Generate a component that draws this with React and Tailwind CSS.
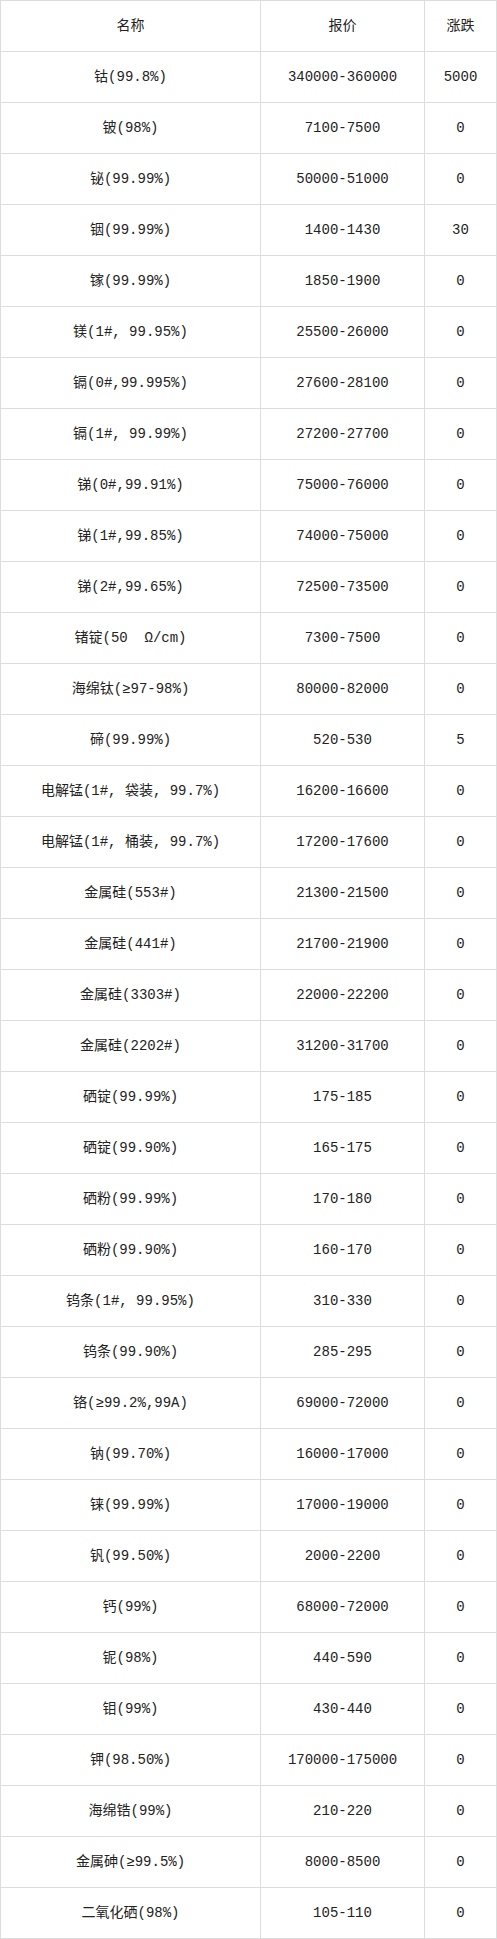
const rows = [
  ["钴(99.8%)", "340000-360000", "5000"],
  ["铍(98%)", "7100-7500", "0"],
  ["铋(99.99%)", "50000-51000", "0"],
  ["铟(99.99%)", "1400-1430", "30"],
  ["镓(99.99%)", "1850-1900", "0"],
  ["镁(1#, 99.95%)", "25500-26000", "0"],
  ["镉(0#,99.995%)", "27600-28100", "0"],
  ["镉(1#, 99.99%)", "27200-27700", "0"],
  ["锑(0#,99.91%)", "75000-76000", "0"],
  ["锑(1#,99.85%)", "74000-75000", "0"],
  ["锑(2#,99.65%)", "72500-73500", "0"],
  ["锗锭(50  Ω/cm)", "7300-7500", "0"],
  ["海绵钛(≥97-98%)", "80000-82000", "0"],
  ["碲(99.99%)", "520-530", "5"],
  ["电解锰(1#, 袋装, 99.7%)", "16200-16600", "0"],
  ["电解锰(1#, 桶装, 99.7%)", "17200-17600", "0"],
  ["金属硅(553#)", "21300-21500", "0"],
  ["金属硅(441#)", "21700-21900", "0"],
  ["金属硅(3303#)", "22000-22200", "0"],
  ["金属硅(2202#)", "31200-31700", "0"],
  ["硒锭(99.99%)", "175-185", "0"],
  ["硒锭(99.90%)", "165-175", "0"],
  ["硒粉(99.99%)", "170-180", "0"],
  ["硒粉(99.90%)", "160-170", "0"],
  ["钨条(1#, 99.95%)", "310-330", "0"],
  ["钨条(99.90%)", "285-295", "0"],
  ["铬(≥99.2%,99A)", "69000-72000", "0"],
  ["钠(99.70%)", "16000-17000", "0"],
  ["铼(99.99%)", "17000-19000", "0"],
  ["钒(99.50%)", "2000-2200", "0"],
  ["钙(99%)", "68000-72000", "0"],
  ["铌(98%)", "440-590", "0"],
  ["钼(99%)", "430-440", "0"],
  ["钾(98.50%)", "170000-175000", "0"],
  ["海绵锆(99%)", "210-220", "0"],
  ["金属砷(≥99.5%)", "8000-8500", "0"],
  ["二氧化硒(98%)", "105-110", "0"],
];

function Row({ cells }) {
  return (
    <div className="grid grid-cols-[260px_164px_1fr] h-[51px] border-b border-[#dddddd]">
      <div className="flex items-center justify-center border-r border-[#dddddd]">{cells[0]}</div>
      <div className="flex items-center justify-center border-r border-[#dddddd]">{cells[1]}</div>
      <div className="flex items-center justify-center">{cells[2]}</div>
    </div>
  );
}

export default function App() {
  return (
    <div className="w-[497px] bg-white">
      <div
        className="border-l border-r border-t border-[#dddddd] text-[14px] text-[#222222] whitespace-pre"
        style={{ fontFamily: '"Liberation Mono", "Noto Sans CJK SC", monospace' }}
      >
        <Row cells={["名称", "报价", "涨跌"]} />
        {rows.map((r, i) => (
          <Row key={i} cells={r} />
        ))}
      </div>
    </div>
  );
}
